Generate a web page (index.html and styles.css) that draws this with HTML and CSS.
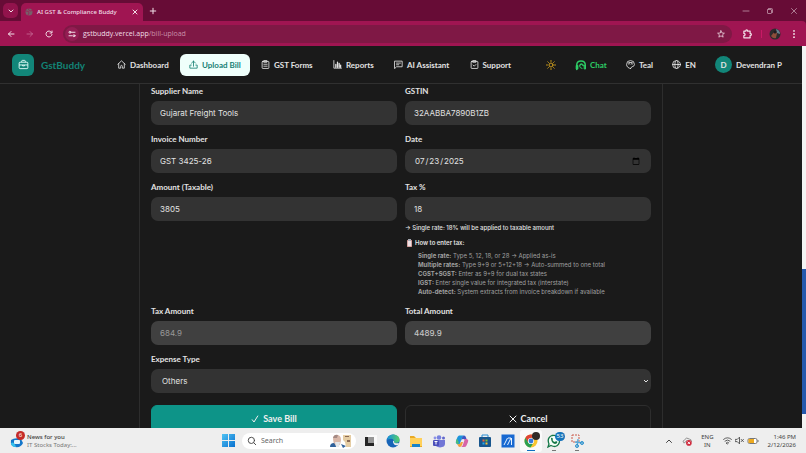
FILE: index.html
```html
<!DOCTYPE html>
<html lang="en">
<head>
<meta charset="utf-8">
<title>AI GST &amp; Compliance Buddy</title>
<link rel="stylesheet" href="styles.css">
</head>
<body>
<div class="screen">
  <header class="browser">
    <div class="tabstrip">
      <button class="tab-menu" aria-label="Search tabs"><svg class="i8 bold" viewBox="0 0 16 16"><path d="M4 6l4 4 4-4"/></svg></button>
      <div class="tab">
        <svg class="i8 tab-icon" viewBox="0 0 16 16"><circle cx="8" cy="8" r="7" fill="#76606a" stroke="none"/><path d="M2 6l5 1 1 3-2 4M8 1l-1 3 3 2 5-1" stroke="#9f1a51"/></svg>
        <span class="tab-title">AI GST &amp; Compliance Buddy</span>
        <button class="plain" aria-label="Close tab"><svg class="i8 bold" viewBox="0 0 16 16"><path d="M4 4l8 8M12 4l-8 8"/></svg></button>
      </div>
      <button class="plain new-tab" aria-label="New tab"><svg class="i8 bold" viewBox="0 0 16 16"><path d="M8 2.500v11M2.500 8h11"/></svg></button>
      <div class="window-controls">
        <button class="plain" aria-label="Minimize"><svg class="i8" viewBox="0 0 16 16"><path d="M2 8h12"/></svg></button>
        <button class="plain" aria-label="Restore"><svg class="i8" viewBox="0 0 16 16"><rect x="3" y="5" width="8" height="8" rx="1"/><path d="M5 3h6q2 0 2 2v6"/></svg></button>
        <button class="plain" aria-label="Close"><svg class="i8" viewBox="0 0 16 16"><path d="M3 3l10 10M13 3L3 13"/></svg></button>
      </div>
    </div>
    <div class="toolbar">
      <button class="plain" aria-label="Back"><svg class="i8 bold" viewBox="0 0 16 16"><path d="M14 8H3M8 3L3 8l5 5"/></svg></button>
      <button class="plain faded" aria-label="Forward"><svg class="i8" viewBox="0 0 16 16"><path d="M2 8h11M8 3l5 5-5 5"/></svg></button>
      <button class="plain" aria-label="Reload"><svg class="i8 bold" viewBox="0 0 16 16"><path d="M13 4.500A6 6 0 1 0 14 9M14 2v4h-4"/></svg></button>
      <div class="address">
        <span class="site-info"><svg class="i8 bold" viewBox="0 0 16 16"><circle cx="4" cy="4.500" r="2"/><path d="M8 4.500h6M2 11.500h6"/><circle cx="12" cy="11.500" r="2"/></svg></span>
        <span class="url">gstbuddy.vercel.app<span class="path">/bill-upload</span></span>
        <button class="plain star" aria-label="Bookmark"><svg class="i8" viewBox="0 0 16 16"><path d="M8 1.500l2 4.500 4.800.4-3.700 3.100 1.200 4.800L8 11.700l-4.300 2.600 1.200-4.800L1.200 6.400 6 6z"/></svg></button>
      </div>
      <button class="plain" aria-label="Extensions"><svg class="i10 bold" viewBox="0 0 16 16"><path d="M3 3.500h3q0-2 1.500-2T9 3.500h4V7q2 0 2 1.700t-2 1.700V14H3v-3.500q2 0 2-1.700T3 7z"/></svg></button>
      <span class="divider"></span>
      <svg class="profile" viewBox="0 0 12 12"><circle cx="6" cy="6" r="5.500" fill="#2e2b2d"/><path d="M2 8q3-4 4-5l2 2-1 5q-3 1-5-2" fill="#8e4d3b"/><path d="M7 1q4 1 4 5L8 5z" fill="#66808e"/><circle cx="6" cy="4" r="1.500" fill="#201d20"/></svg>
      <button class="plain" aria-label="Menu"><svg class="i10" viewBox="0 0 16 16"><g fill="currentColor" stroke="none"><circle cx="8" cy="3" r="1.500"/><circle cx="8" cy="8" r="1.500"/><circle cx="8" cy="13" r="1.500"/></g></svg></button>
    </div>
  </header>

  <div class="viewport">
    <div class="page">
      <header class="app-header">
        <a class="brand" href="#">
          <span class="logo"><svg viewBox="0 0 24 24"><rect x="2.500" y="7" width="19" height="14" rx="2"/><path d="M8 7V5q0-2 2-2h4q2 0 2 2v2M2.500 13h19M10 13v2h4v-2"/></svg></span>
          <span>GstBuddy</span>
        </a>
        <nav class="nav">
          <a href="#"><svg class="i9" viewBox="0 0 16 16"><path d="M1.500 7.500L8 1.500l6.500 6M3 6.500v8h3.500v-3q0-2 1.500-2t1.500 2v3H13v-8"/></svg>Dashboard</a>
          <a class="active" href="#"><svg class="i9" viewBox="0 0 16 16"><path d="M8 11V2M4.500 5.500L8 2l3.500 3.500M4 9H1.500v5.500h13V9H12"/></svg>Upload Bill</a>
          <a href="#"><svg class="i9" viewBox="0 0 16 16"><rect x="2" y="2.500" width="12" height="12.500" rx="1"/><path d="M5.500 1h5v3h-5zM5 7.500h6M5 11h6"/></svg>GST Forms</a>
          <a href="#"><svg class="i9" viewBox="0 0 16 16"><path d="M1.500 1v13.500H15"/><path d="M5 13V8M8 13V4M11 13V6M13.500 13V9" stroke-width="2.300"/></svg>Reports</a>
          <a href="#"><svg class="i9" viewBox="0 0 16 16"><path d="M1.500 2h13v10h-10l-3 3zM4.500 5.500h7M4.500 8.500h4"/></svg>AI Assistant</a>
          <a href="#"><svg class="i9" viewBox="0 0 16 16"><rect x="2" y="2.500" width="12" height="12.500" rx="1"/><path d="M5.500 1h5v3h-5zM5.500 9l2 2 3-3"/></svg>Support</a>
        </nav>
        <div class="tools">
          <button class="plain sun" aria-label="Toggle theme"><svg class="i10" viewBox="0 0 16 16"><circle cx="8" cy="8" r="3.200"/><path d="M8 .8v1.500M8 13.700v1.500M.8 8h1.500M13.700 8h1.500M2.900 2.900l1 1M12.100 12.100l1 1M2.900 13.100l1-1M12.100 3.900l1-1"/></svg></button>
          <a class="chat" href="#"><svg class="i12" viewBox="0 0 24 24"><path d="M3.500 21V12q0-8 8.500-8t8.500 8v7" stroke-width="3"/><path d="M3 13h3v7H3zM19 13h2v7h-2z" fill="currentColor"/><path d="M9 13q0-4 4-4 4 1 5 5-3 0-5-3-1 2-4 2z" fill="currentColor" stroke-width="1"/><path d="M9 14q1 5 5 5" stroke-width="2"/></svg>Chat</a>
          <a href="#"><svg class="i9" viewBox="0 0 16 16"><path d="M8 15A7 7 0 1 1 15 8q0 3-3 3.500-2 0-2 1.500t-2 2z"/><path d="M4 7q2-2 3 0M9 7q2-2 3 0M5 4.500h6"/></svg>Teal</a>
          <a href="#"><svg class="i9" viewBox="0 0 16 16"><circle cx="8" cy="8" r="7"/><ellipse cx="8" cy="8" rx="3" ry="7"/><path d="M1 8h14"/></svg>EN</a>
          <a class="user" href="#"><span class="avatar">D</span>Devendran P</a>
        </div>
      </header>

      <main class="main">
        <form class="card">
          <div class="grid">
            <div class="field"><label for="supplier">Supplier Name</label><input id="supplier" type="text" value="Gujarat Freight Tools"></div>
            <div class="field"><label for="gstin">GSTIN</label><input id="gstin" type="text" value="32AABBA7890B1ZB"></div>
            <div class="field"><label for="invoice">Invoice Number</label><input id="invoice" type="text" value="GST 3425-26"></div>
            <div class="field"><label for="date">Date</label><input id="date" type="date" value="2025-07-23"></div>
            <div class="field"><label for="amount">Amount (Taxable)</label><input id="amount" type="text" value="3805"></div>
            <div class="field">
              <label for="tax">Tax %</label><input id="tax" type="text" value="18">
              <p class="hint">→ Single rate: 18% will be applied to taxable amount</p>
              <p class="help-title"><svg class="clipboard" viewBox="0 0 7 8"><rect x="1" y="1" width="5" height="7" fill="#b76a62"/><rect x="1.500" y="1.500" width="4" height="6" fill="#eee0e4"/><path d="M2 0h3v2H2z" fill="#a6a9b3"/></svg>How to enter tax:</p>
              <ul class="help">
                <li><b>Single rate:</b> Type 5, 12, 18, or 28 → Applied as-is</li>
                <li><b>Multiple rates:</b> Type 9+9 or 5+12+18 → Auto-summed to one total</li>
                <li><b>CGST+SGST:</b> Enter as 9+9 for dual tax states</li>
                <li><b>IGST:</b> Enter single value for integrated tax (interstate)</li>
                <li><b>Auto-detect:</b> System extracts from invoice breakdown if available</li>
              </ul>
            </div>
            <div class="field"><label for="taxamount">Tax Amount</label><input id="taxamount" class="computed muted" type="text" value="684.9" readonly></div>
            <div class="field"><label for="total">Total Amount</label><input id="total" class="computed total" type="text" value="4489.9" readonly></div>
            <div class="field wide">
              <label for="expense">Expense Type</label>
              <div class="select"><select id="expense"><option>Others</option></select><svg viewBox="0 0 8 8"><path d="M2 3l2 2 2-2"/></svg></div>
            </div>
          </div>
          <div class="actions">
            <button class="save" type="submit"><svg class="i8" viewBox="0 0 16 16"><path d="M2.500 9.500L6 14 13.500 2"/></svg>Save Bill</button>
            <button class="cancel" type="button"><svg class="i8" viewBox="0 0 16 16"><path d="M2 2l12 12M14 2L2 14"/></svg>Cancel</button>
          </div>
        </form>
      </main>
    </div>
    <div class="scrollbar"><span class="thumb"></span></div>
  </div>

  <footer class="taskbar">
    <div class="news">
      <span class="news-icon"><svg viewBox="0 0 14 14"><path d="M1 6q4-3 10-1l2 4q-2 5-8 4Q0 12 1 6" fill="#1476ca"/><path d="M1 9q3-2 5 4-5 0-5-4" fill="#35c1ed"/><rect x="4" y="6" width="6" height="4" rx="1" fill="#e8f5fc"/></svg><span class="news-badge">6</span></span>
      <span class="news-text"><strong>News for you</strong><span>IT Stocks Today:...</span></span>
    </div>
    <div class="dock">
      <svg class="app start" viewBox="0 0 13 13"><defs><linearGradient id="win" x2="1" y2="1"><stop stop-color="#50c3f3"/><stop offset="1" stop-color="#0870cf"/></linearGradient></defs><path d="M0 0h6v6H0zM7 0h6v6H7zM0 7h6v6H0zM7 7h6v6H7z" fill="url(#win)"/></svg>
      <label class="search"><svg class="i10" viewBox="0 0 16 16"><circle cx="7" cy="7" r="5"/><path d="M11 11l3 3"/></svg><input type="text" placeholder="Search" aria-label="Search">
        <svg class="people" viewBox="0 0 24 14"><path d="M4 5q0-4 4-4t4 5l-1 5H5z" fill="#d9b7a8"/><path d="M4 4q1-4 5-3l-1 3z" fill="#a58a84"/><path d="M1 13q0-4 4-4l3 4zM12 10l5 2-3 2z" fill="#31629b"/><path d="M6 8h5l-1 5H7z" fill="#e5e7e9"/><path d="M14 1h8v12h-5l-1-5-2-2z" fill="#e5cda4"/><path d="M16 2h4v1h-4zM18 6h3v2h-3z" fill="#8b6b55"/></svg></label>
      <svg class="app" viewBox="0 0 14 14"><path d="M4 1h10v9H4z" fill="#f9f9f9"/><path d="M2 3h3v6h6v3H2z" fill="#252525"/><path d="M5 3h6v6H5z" fill="#969696"/></svg>
      <svg class="app" viewBox="0 0 14 14"><defs><linearGradient id="edge" x2="1" y2="0"><stop stop-color="#148ddd"/><stop offset="1" stop-color="#58d069"/></linearGradient></defs><circle cx="7" cy="7" r="6.500" fill="#1764b7"/><path d="M1 7Q1 0 8 .5q6 1 5.500 6Q13 9 9 9q-2 0-1-2-1-3-4-2-3 0-3 2" fill="url(#edge)"/><path d="M7 7q1-1 1 1 0 2 5 1l-1 2Q7 12 7 7" fill="#eee"/></svg>
      <svg class="app" viewBox="0 0 14 14"><path d="M1 2h4l2 2h6v9H1z" fill="#e9aa23"/><path d="M1 4h12v8H1z" fill="#ffd05a"/><path d="M3 10h8v3H3z" fill="#1683ca"/></svg>
      <svg class="app" viewBox="0 0 14 14"><circle cx="7" cy="3.500" r="2.300" fill="#7781df"/><circle cx="11.500" cy="4" r="1.500" fill="#6167cd"/><circle cx="3" cy="4" r="1.400" fill="#8d93e6"/><path d="M3 6h10v4q0 3-5 3.500Q3 13 3 9z" fill="#7176d6"/><rect x="1" y="6" width="6" height="6" rx="1" fill="#4b4fba"/><path d="M2.500 7.500h3M4 7.500v3" stroke="#fff"/></svg>
      <svg class="app" viewBox="0 0 14 14"><path d="M4 1.500h5q-2 1-3 5l-1 3Q4 11 2 10 0 9 1 7l1.500-4Q3 2 4 1.500" fill="#1c94dc"/><path d="M9 1.500q1.500 0 2 2L11.500 5H8q-1.500 0-2 2l.5-2Q7 2 9 1.500" fill="#3b57c4"/><path d="M8 5h4q2 1 1 3l-1.500 3.500Q11 13 9 13H6q2-1 2.500-4l1-3Q9 5 8 5" fill="#d764a6"/><path d="M2 10q2 1 3.500-1L6 8h2l-1 3q-1 2-2 2-1.500 0-2-1.500z" fill="#f2a13b"/><path d="M1 7l1-2.500L4 9q-1 1.500-2 1-1.500-1-1-3" fill="#4bbd7a"/></svg>
      <svg class="app" viewBox="0 0 14 14"><path d="M4 4V1h6v3" fill="none" stroke="#298ed4"/><rect x="1" y="3" width="12" height="10" rx="1" fill="#17568e"/><path d="M4.500 5.500h2v2h-2z" fill="#f26339"/><path d="M7.500 5.500h2v2h-2z" fill="#82bd35"/><path d="M4.500 8.500h2v2h-2z" fill="#27a9e9"/><path d="M7.500 8.500h2v2h-2z" fill="#fcc736"/></svg>
      <svg class="app" viewBox="0 0 14 14"><rect x=".5" y=".5" width="13" height="13" fill="#1768d1"/><path d="M3 11l3.500-7M6.500 11L10 4H7M10.500 11V4" fill="none" stroke="#e6f3ff"/></svg>
      <span class="app running current"><svg viewBox="0 0 14 14"><circle cx="7" cy="7" r="6.500" fill="#f9c531"/><path d="M1.400 3.700A6.500 6.500 0 0 1 12.600 3.700H7L4 8.500z" fill="#df4536"/><path d="M1.400 3.700A6.500 6.500 0 0 0 6.500 13.500L9.500 8.700 4.500 9z" fill="#2ca052"/><circle cx="7" cy="7" r="3.100" fill="#fff"/><circle cx="7" cy="7" r="2.400" fill="#3478de"/></svg><i class="mini-profile"></i></span>
      <span class="app running"><svg viewBox="0 0 14 14"><path d="M1 13l1-3Q-.5 4 5 1.500q6-1 7.500 4Q13 11 8 12.500q-2 0-4-1z" fill="#f6fff8" stroke="#147747" stroke-width="1.300"/><path d="M4 4q1-1 2 1l-.5 1q1 2 2.500 2l1-1 1.500 1Q10 10 8 10 4 9 4 4" fill="#147747"/></svg><i class="count">53</i></span>
      <span class="app running"><svg viewBox="0 0 14 14"><path d="M2 1h7v7H2z" fill="none" stroke="#cc5a4a" stroke-dasharray="2 1"/><path d="M5 8l8 1M7 13l1-8" stroke="#55a9d9" stroke-width="1.300"/><circle cx="7" cy="12" r="1.500" fill="none" stroke="#2b8fcb"/><circle cx="12" cy="9" r="1.500" fill="none" stroke="#2b8fcb"/></svg></span>
    </div>
    <div class="tray">
      <svg class="i8 bold" viewBox="0 0 16 16"><path d="M3 11l5-5 5 5"/></svg>
      <svg class="i10" viewBox="0 0 16 16"><path d="M3 11q-3-3 1-5 3-5 8-1 3 0 3 4M4 11l4-4" stroke="#888"/><circle cx="11" cy="11" r="4.500" fill="#cf293c" stroke="none"/><path d="M9.500 9.500l3 3M12.500 9.500l-3 3" stroke="#fff"/></svg>
      <span class="lang">ENG<br>IN</span>
      <span class="status">
        <svg class="i9" viewBox="0 0 16 16"><path d="M1 6q7-6 14 0M3.500 9q4.500-4 9 0M6 12q2-2 4 0L8 14z"/></svg>
        <svg class="i9" viewBox="0 0 16 16"><path d="M1 6h3l4-4v12l-4-4H1zM11 6l4 4M15 6l-4 4"/></svg>
        <svg class="battery" viewBox="0 0 12 8"><rect x="1" y="1.500" width="9" height="5" rx="1.500" fill="#fff" stroke="#777"/><path d="M1.500 2H7v4H1.500z" fill="#edaa20"/><path d="M11 3v2" stroke="#777"/></svg>
      </span>
      <span class="clock">1:46 PM<br>2/12/2026</span>
    </div>
  </footer>
</div>
</body>
</html>
```
FILE: styles.css
```css
* { box-sizing: border-box; }
html, body { height: 100%; margin: 0; }
body {
  background: #1a1a1a;
  color: #e2e2e2;
  font: 8px/10px Lato, "Open Sans", sans-serif;
  overflow: hidden;
}
a { color: inherit; text-decoration: none; }
button, input, select { font: inherit; color: inherit; }
svg { display: block; flex: none; fill: none; stroke: none; }
.i8, .i9, .i10, .i12 { stroke: currentColor; stroke-width: 1.500; stroke-linecap: round; stroke-linejoin: round; }
.i8 { width: 8px; height: 8px; }
.i9 { width: 9px; height: 9px; }
.i10 { width: 10px; height: 10px; }
.i12 { width: 12px; height: 12px; }
.bold { stroke-width: 2; }
.plain { display: flex; padding: 0; border: 0; background: none; }
.screen { display: flex; flex-direction: column; height: 100vh; }

/* Browser frame */
.browser { background: #670c36; color: #f1dfe7; font-family: "Open Sans", sans-serif; font-size: 7px; }
.tabstrip { display: flex; align-items: center; height: 21px; padding: 0 8px 0 3px; }
.tab-menu { display: grid; place-items: center; width: 15px; height: 15px; padding: 0; border: 0; border-radius: 5px; background: #92134c; }
.tab { display: flex; align-items: center; align-self: flex-end; gap: 4px; width: 122px; height: 18px; margin-left: 3px; padding: 0 4px; border-radius: 5px 5px 0 0; background: #a01552; }
.tab-title { flex: 1; white-space: nowrap; font-family: "Noto Sans", sans-serif; font-size: 6px; font-weight: 500; }
.new-tab { margin-left: 6px; }
.window-controls { display: flex; gap: 16px; margin-left: auto; color: #c5a0b1; }
.toolbar { display: flex; align-items: center; gap: 11px; height: 25px; padding: 0 7px; background: #a01552; border-radius: 0 4px 0 0; }
.faded { color: #c9719b; }
.address { display: flex; flex: 1; align-items: center; gap: 4px; height: 18px; margin: 0 -1px; padding: 0 7px 0 2px; border-radius: 9px; background: #7f1845; }
.site-info { display: grid; place-items: center; width: 14px; height: 14px; border-radius: 7px; background: #941d53; }
.path { color: #c990aa; }
.star { margin-left: auto; }
.divider { width: 1px; height: 8px; margin: 0 -4px 0 -2px; background: #c81965; }
.profile { width: 12px; height: 12px; margin-right: -3px; }

/* Page */
.viewport { display: flex; flex: 1; min-height: 0; }
.page { display: flex; flex: 1; flex-direction: column; min-width: 0; }
.scrollbar { display: flex; flex-direction: column; width: 4px; padding: 223px 0 14px; background: #f3f3f3; }
.thumb { flex: 1; background: #2559ad; }
.app-header {
  display: grid;
  grid-template-columns: 96px 412fr 262fr;
  align-items: center;
  height: 38px;
  flex: none;
  padding: 0 20px 0 12px;
  border-bottom: 1px solid #303030;
  font-weight: 700;
  white-space: nowrap;
}
.brand { display: flex; align-items: center; gap: 7px; color: #128376; font-size: 10px; font-weight: 700; }
.logo { display: grid; place-items: center; width: 22px; height: 22px; border-radius: 6px; background: #128679; }
.logo svg { width: 11px; height: 11px; stroke: #e5fffb; stroke-width: 2; }
.nav, .tools { display: flex; align-items: center; justify-content: space-between; }
.nav a { display: flex; align-items: center; gap: 4px; height: 22px; padding: 0 9px; border-radius: 6px; }
.nav .active { background: #effffb; color: #168074; }
.tools { padding-left: 26px; }
.tools a { display: flex; align-items: center; gap: 4px; }
.tools .sun { color: #d9a51d; }
.tools .chat { gap: 3px; color: #2dcd66; }
.avatar { display: grid; place-items: center; width: 17px; height: 17px; border-radius: 50%; background: #128679; }

/* Bill form */
.main { flex: 1; min-height: 0; overflow: hidden; }
.card { max-width: 524px; margin: 0 auto; padding: 2px 11px 12px; border: 1px solid #2d2d2d; border-width: 0 1px; }
.grid { display: grid; grid-template-columns: 1fr 1fr; gap: 9px 8px; }
.field { display: flex; flex-direction: column; min-width: 0; }
.wide { grid-column: 1 / -1; }
.field label { margin-bottom: 5px; font-weight: 700; }
.field input, .field select {
  width: 100%;
  height: 24px;
  margin: 0;
  padding: 0 9px;
  border: 0;
  border-radius: 7px;
  background: #333333;
  font-family: Inter, sans-serif;
  font-size: 8px;
  outline: 0;
}
.field .computed { background: #404040; }
.field .muted { color: #999999; }
.field .total { color: #c4c4c4; font-weight: 500; }
.hint, .help-title, .help { margin: 0; padding: 0; font-family: Inter, sans-serif; font-size: 6px; white-space: nowrap; }
.hint { margin-top: 2px; font-weight: 500; }
.help-title { display: flex; align-items: center; gap: 2px; margin: 5px 0 3px 1px; font-weight: 600; }
.clipboard { width: 7px; height: 8px; }
.help { margin-bottom: 1px; padding-left: 13px; color: #a0a0a0; line-height: 9px; list-style: none; }
.help b { font-weight: 700; }
.select { position: relative; }
.field select { appearance: none; padding-left: 11px; }
.select svg { position: absolute; top: 8px; right: 1px; width: 8px; height: 8px; stroke: #e2e2e2; pointer-events: none; }
.actions { display: grid; grid-template-columns: 1fr 1fr; gap: 8px; margin-top: 12px; }
.actions button { display: flex; align-items: center; justify-content: center; gap: 4px; height: 28px; border: 1px solid #2d2d2d; border-radius: 6px; background: #1a1a1a; color: #f0f0f0; font-size: 9px; font-weight: 700; }
.actions svg { stroke-width: 2; }
.actions .save { border-color: #0d9488; background: #0d9488; }

/* Taskbar */
.taskbar {
  display: grid;
  grid-template-columns: 221px 1fr auto;
  align-items: center;
  height: 25px;
  flex: none;
  padding: 0 10px;
  background: #eeeeee;
  color: #424242;
  font-family: "Noto Sans", sans-serif;
  font-size: 6px;
  line-height: 8px;
}
.taskbar .i8, .taskbar .i9, .taskbar .i10 { stroke: #444444; }
.news { display: flex; gap: 3px; align-items: center; }
.news-icon { position: relative; }
.news-icon svg { width: 14px; height: 14px; }
.news-badge { position: absolute; top: -3px; right: -1px; width: 9px; height: 9px; border-radius: 50%; background: #c52b27; color: #fff; line-height: 9px; text-align: center; }
.news-text { display: flex; flex-direction: column; }
.news-text strong { font-weight: 500; }
.news-text span { color: #777777; }
.dock { display: flex; align-items: center; gap: 9px; margin-left: -9px; }
.app { position: relative; flex: none; width: 14px; height: 14px; }
.start { width: 13px; height: 13px; }
.search { display: flex; align-items: center; gap: 4px; width: 114px; height: 16px; margin: 0 -2px; padding: 0 3px 0 5px; border-radius: 8px; background: #fff; }
.search input { flex: 1; width: 0; min-width: 0; padding: 0; border: 0; background: none; outline: 0; font-size: 7px; }
.search input::placeholder { color: #666666; }
.people { width: 24px; height: 14px; }
.running::after { content: ""; position: absolute; right: 5px; bottom: -3px; left: 5px; height: 1px; background: #777777; }
.current::before { content: ""; position: absolute; inset: -4px; border-radius: 3px; background: #fafafa; z-index: 0; }
.current svg { position: relative; }
.current::after { right: 3px; left: 3px; background: #0d71c2; }
.mini-profile { position: absolute; top: -2px; right: -2px; width: 8px; height: 8px; border-radius: 50%; background: #312a28; }
.count { position: absolute; top: -2px; right: -4px; width: 10px; height: 9px; border-radius: 5px; background: #1673ba; color: #fff; font-style: normal; line-height: 9px; text-align: center; }
.tray { display: flex; align-items: center; gap: 9px; }
.lang { text-align: center; }
.status { display: flex; align-items: center; gap: 3px; }
.battery { width: 12px; height: 8px; }
.clock { text-align: right; }
```
